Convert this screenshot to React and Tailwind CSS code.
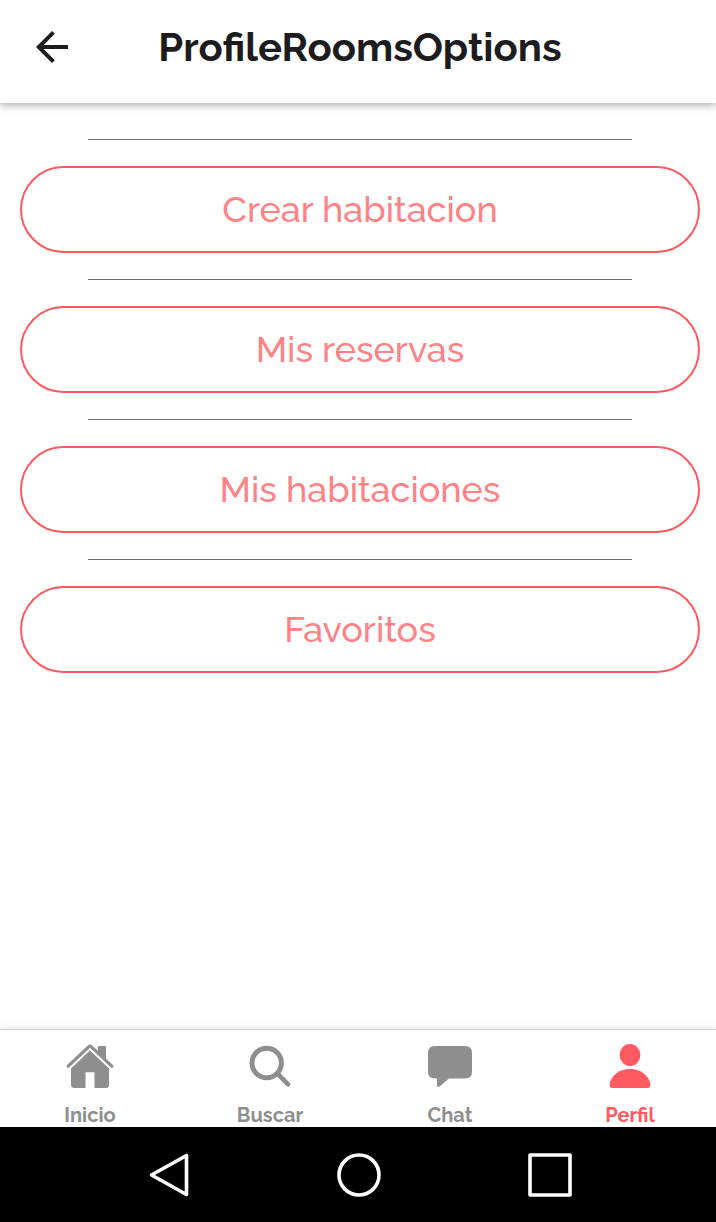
const options = ['Crear habitacion', 'Mis reservas', 'Mis habitaciones', 'Favoritos'];

function HomeIcon() {
  return (
    <svg className="size-12" viewBox="0 0 48 48" fill="currentColor" aria-hidden="true">
      <path d="M31.8 10.6V5.2Q31.8 4 33 4h5.8Q40 4 40 5.2v13.2z" />
      <path d="M2.2 24.2 22.9 4.6q1.1-1 2.2 0l20.7 19.6" fill="none" stroke="currentColor" strokeWidth="3.2" strokeLinecap="round" strokeLinejoin="round" />
      <path d="M24 8.6 43 26.4V43q0 3-3 3H28.500V31q0-.8-.8-.8h-7.400q-.8 0-.8.8v15H8q-3 0-3-3V26.4z" />
    </svg>
  );
}

function SearchIcon() {
  return (
    <svg className="size-12" viewBox="0 0 48 48" fill="none" stroke="currentColor" strokeLinecap="round" aria-hidden="true">
      <circle cx="20.7" cy="21" r="14.7" strokeWidth="5" />
      <path d="m31.5 31.7 10.6 10.6" strokeWidth="4.6" />
    </svg>
  );
}

function ChatIcon() {
  return (
    <svg className="size-12" viewBox="0 0 48 48" fill="currentColor" aria-hidden="true">
      <path d="M9 4h30q7 0 7 7v18.5q0 7-7 7H23l-9.2 7.8q-2.8 1.6-2.8-.8v-7H9q-7 0-7-7V11q0-7 7-7z" />
    </svg>
  );
}

function PersonIcon() {
  return (
    <svg className="size-12" viewBox="0 0 48 48" fill="currentColor" aria-hidden="true">
      <ellipse cx="24" cy="13" rx="10.4" ry="11.1" />
      <path d="M24 27c11 0 19 6.5 20.4 15.5q.2 3.5-3.2 3.5H6.7q-3.3 0-3.2-3.5C5 33.5 13 27 24 27z" />
    </svg>
  );
}

const tabs = [
  { label: 'Inicio', Icon: HomeIcon },
  { label: 'Buscar', Icon: SearchIcon },
  { label: 'Chat', Icon: ChatIcon },
  { label: 'Perfil', Icon: PersonIcon, active: true },
];

export default function App() {
  return (
    <div className="flex min-h-screen flex-col overflow-x-hidden bg-white font-[Raleway,Lato,sans-serif]">
      <header className="relative grid h-[103px] grid-cols-[48px_1fr_48px] items-center bg-white pr-6 pb-[9px] pl-7 shadow-[0_2px_8px_rgba(0,0,0,0.35)]">
        <button type="button" aria-label="Volver" className="flex size-12 items-center justify-center text-[#1c1c1e]">
          <svg className="size-12" viewBox="0 0 24 24" fill="currentColor" aria-hidden="true">
            <path d="M20 11H7.83l5.59-5.59L12 4l-8 8 8 8 1.41-1.41L7.83 13H20v-2z" />
          </svg>
        </button>
        <h1 className="text-center text-[40px] leading-12 font-bold text-[#1c1c1e]">ProfileRoomsOptions</h1>
      </header>

      <main className="flex flex-1 flex-col gap-[26px] pt-9 pr-4 pb-9 pl-5">
        {options.map((option) => (
          <section key={option} className="flex flex-col items-center gap-[26px]">
            <hr className="w-4/5 border-t border-[#6e6e6e]" />
            <button type="button" className="h-[87px] w-full rounded-full border-2 border-[#ff5a5f] pb-0.5 text-[36px] leading-11 font-medium text-[#ff8287]">
              {option}
            </button>
          </section>
        ))}
      </main>

      <nav className="-mr-1 grid h-[98px] grid-cols-4 border-t border-[#d0d0d0] bg-white shadow-[0_0_8px_rgba(0,0,0,0.12)]">
        {tabs.map(({ label, Icon, active }) => (
          <a
            key={label}
            href="#"
            aria-current={active ? 'page' : undefined}
            className={`flex flex-col items-center gap-[13px] pt-3 text-[20px] leading-6 font-bold ${active ? 'text-[#ff5a5f]' : 'text-[#8e8e8e]'}`}
          >
            <Icon />
            {label}
          </a>
        ))}
      </nav>

      <footer className="relative flex h-[95px] items-center justify-center gap-[142px] bg-black pl-0.5 text-white">
        <button type="button" aria-label="Atrás">
          <svg className="size-12" viewBox="0 0 48 48" fill="none" stroke="currentColor" strokeWidth="3.6" strokeLinejoin="round" aria-hidden="true">
            <path d="M6.5 24 41.500 4.500v39z" />
          </svg>
        </button>
        <button type="button" aria-label="Inicio del sistema">
          <svg className="size-12" viewBox="0 0 48 48" fill="none" stroke="currentColor" strokeWidth="3.6" aria-hidden="true">
            <circle cx="24" cy="24" r="20" />
          </svg>
        </button>
        <button type="button" aria-label="Aplicaciones recientes">
          <svg className="size-12" viewBox="0 0 48 48" fill="none" stroke="currentColor" strokeWidth="3.6" strokeLinejoin="round" aria-hidden="true">
            <rect x="5" y="4" width="40" height="40" />
          </svg>
        </button>
      </footer>
    </div>
  );
}
